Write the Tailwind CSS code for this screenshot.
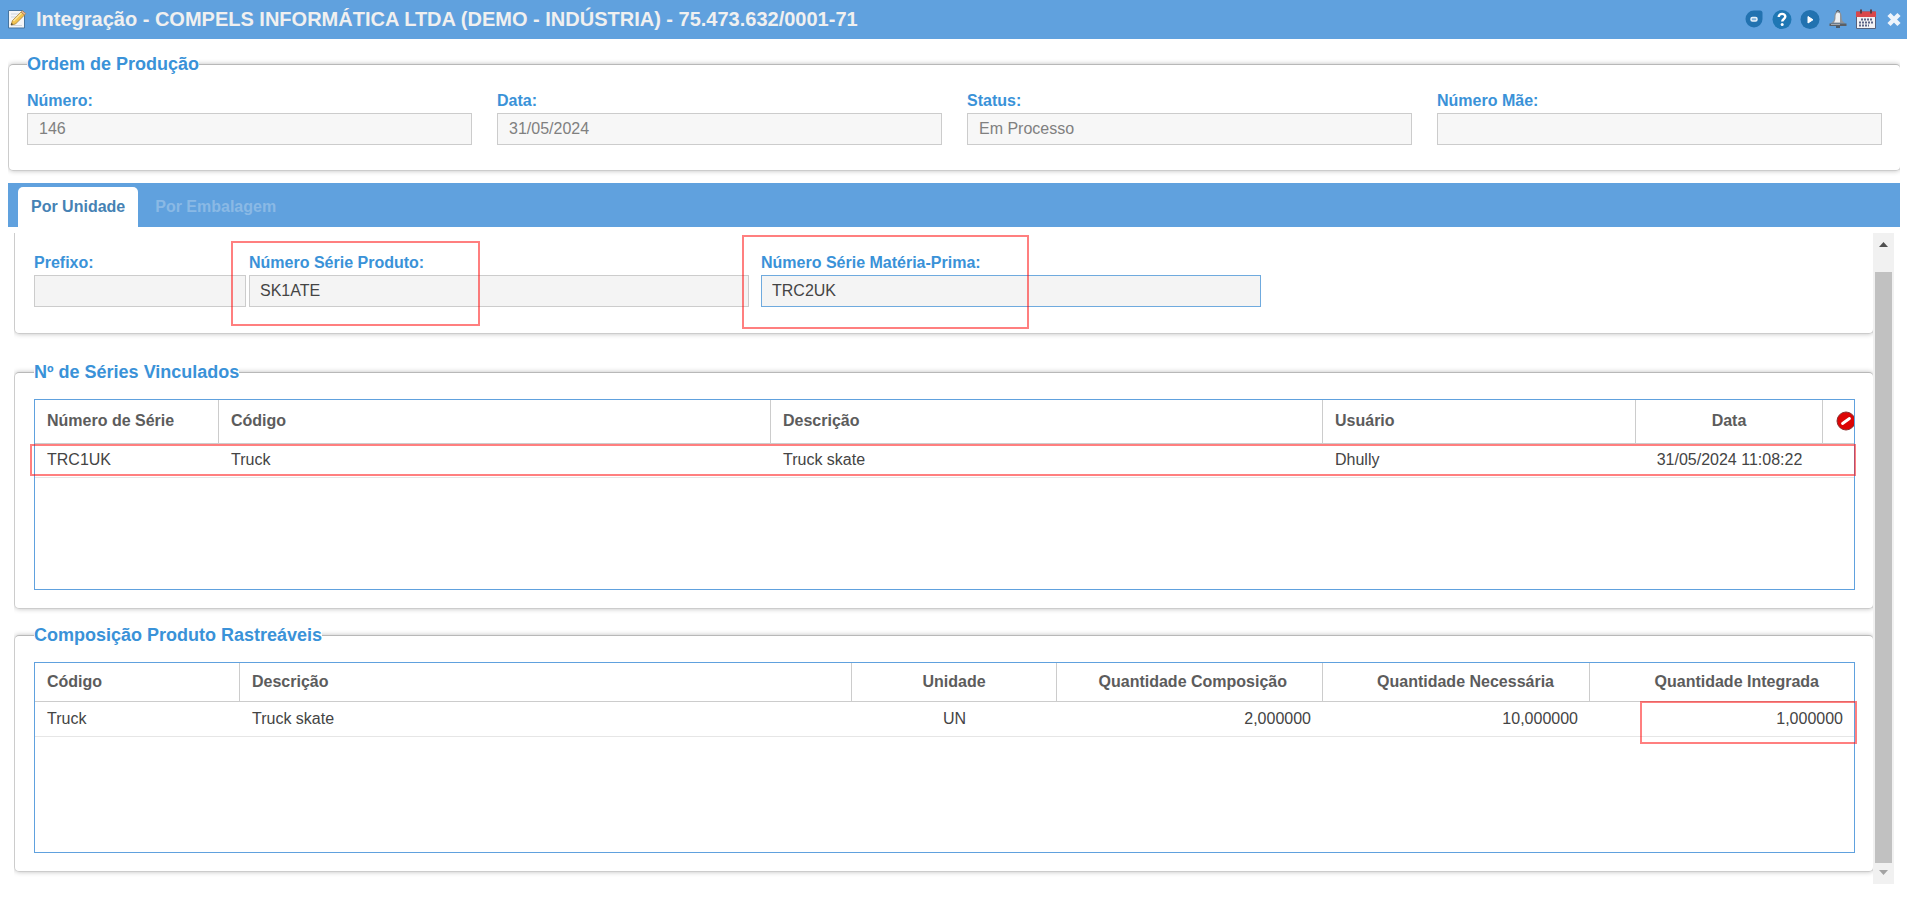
<!DOCTYPE html>
<html lang="pt-BR">
<head>
  <meta charset="UTF-8" />
  <meta name="viewport" content="width=device-width, initial-scale=1" />
  <title>Integração</title>
  <script src="https://cdn.jsdelivr.net/npm/@tailwindcss/browser@4"></script>
</head>
<body class="flex h-screen flex-col overflow-hidden bg-white font-['Liberation_Sans',Arial,sans-serif] text-base/5 text-[#444]">

  <!-- Title bar -->
  <header class="flex h-[39px] shrink-0 items-center bg-[#60a1de] pb-0.5 pl-2 pr-[3px]">
    <svg class="size-5 shrink-0" viewBox="0 0 20 20">
      <path d="M.5 1.500h14l2 2v15.500H.5z" fill="#f4f6f8" stroke="#47759f" stroke-width="1" />
      <path d="M3 5h8M3 8h6M3 16.500h11" stroke="#cfd6dc" />
      <path d="M3 16l1.500-4.500L13 3l3.500 3-9 9z" fill="#f2c44e" stroke="#a6803a" stroke-width=".8" />
      <path d="M5.500 12l8-8" stroke="#fbe7a0" stroke-width="1.500" />
      <path d="M13 3l1.500-1.200 3.300 2.700L16.500 6z" fill="#e9b39a" stroke="#a6803a" stroke-width=".6" />
      <path d="M3 16l.6-2 1.500 1.300z" fill="#333" />
    </svg>
    <h1 class="ml-2 text-xl font-bold text-[#f0f0f0]">Integração - COMPELS INFORMÁTICA LTDA (DEMO - INDÚSTRIA) - 75.473.632/0001-71</h1>
    <nav class="ml-auto flex items-center gap-2">
      <button type="button" aria-label="Minimizar" class="size-5">
        <svg viewBox="0 0 20 20">
          <path d="M10 1.500h6q2.500 0 2.500 2.500v6A8.500 8.500 0 1 1 10 1.500z" fill="#2272b0" />
          <rect x="7" y="8.500" width="6" height="3.500" rx="1.500" fill="#7fb0da" stroke="#e8f1f9" stroke-width="1.500" />
        </svg>
      </button>
      <button type="button" aria-label="Ajuda" class="size-5">
        <svg viewBox="0 0 20 20">
          <circle cx="10" cy="10.500" r="9.500" fill="#1f77b4" />
          <path d="M6.700 8c0-4.200 6.800-4 6.600-.2-.1 2.200-3.100 2.300-3.100 4.800" fill="none" stroke="#fff" stroke-width="2.400" />
          <circle cx="10.200" cy="15.500" r="1.500" fill="#fff" />
        </svg>
      </button>
      <button type="button" aria-label="Executar" class="size-5">
        <svg viewBox="0 0 20 20">
          <circle cx="10" cy="10.500" r="9.500" fill="#2272b0" />
          <path d="M8 7.500v6.500l5-3.250z" fill="#fff" stroke="#fff" />
        </svg>
      </button>
      <button type="button" aria-label="Alertas" class="size-5">
        <svg viewBox="0 0 20 20">
          <path d="M8.500 3a1.500 1.500 0 0 1 3 0" fill="none" stroke="#555" />
          <path d="M10 2.500c-2.800 0-3.600 2.500-3.600 5.500 0 3-1 4.500-3.900 6.500h15c-2.900-2-3.900-3.500-3.900-6.500 0-3-.8-5.500-3.600-5.500z" fill="#8d9298" />
          <path d="M10 3.500C8 3.500 7.500 6 7.500 8.500c0 2-.5 3.500-1.500 5h6V4.500z" fill="#eef0f2" />
          <path d="M1.500 14.500h17v2.500h-17z" fill="#5b5f64" />
          <path d="M3 15.500h9" stroke="#a4a8ac" />
          <path d="M8 18h4" stroke="#444" stroke-width="1.500" />
        </svg>
      </button>
      <button type="button" aria-label="Calendário" class="size-5">
        <svg viewBox="0 0 20 20">
          <path d="M.5 3h19v16.500H.5z" fill="#f3f3f5" stroke="#56607a" />
          <path d="M0 2.500h20V8H0z" fill="#d9474b" />
          <path d="M5 .5v4M15 .5v4" stroke="#5b3b44" stroke-width="2" />
          <path d="M5 10.500h12M3 13.500h14M3 16.500h10" stroke="#5c6486" stroke-width="2" stroke-dasharray="2 1" />
        </svg>
      </button>
      <button type="button" aria-label="Fechar" class="size-5">
        <svg viewBox="0 0 20 20">
          <path d="M5 5.500l10 10M15 5.500L5 15.500" stroke="#eef4fb" stroke-width="4.500" />
        </svg>
      </button>
    </nav>
  </header>

  <main class="flex min-h-0 flex-1 flex-col pb-[17px] pl-2 pr-[7px] pt-[15px]">

    <!-- Ordem de Produção -->
    <div class="shrink-0 overflow-x-clip">
      <fieldset class="-mr-px rounded-[5px] border border-[#ccc] border-t-[#b8b8b8] px-[18px] pb-[25px] shadow-[0_0_5px_rgba(0,0,0,0.25)]">
        <legend class="bg-white text-lg/5 font-bold text-[#3a92d8]">Ordem de Produção</legend>
        <div class="grid grid-cols-4 gap-x-[25px] pt-[17px]">
          <div class="flex flex-col gap-0.5">
            <label for="numero" class="font-bold text-[#3a92d8]">Número:</label>
            <input id="numero" type="text" value="146" disabled class="h-8 w-full border border-[#ccc] bg-[#f7f7f7] px-[11px] text-[#808080]" />
          </div>
          <div class="flex flex-col gap-0.5">
            <label for="data" class="font-bold text-[#3a92d8]">Data:</label>
            <input id="data" type="text" value="31/05/2024" disabled class="h-8 w-full border border-[#ccc] bg-[#f7f7f7] px-[11px] text-[#808080]" />
          </div>
          <div class="flex flex-col gap-0.5">
            <label for="status" class="font-bold text-[#3a92d8]">Status:</label>
            <input id="status" type="text" value="Em Processo" disabled class="h-8 w-full border border-[#ccc] bg-[#f7f7f7] px-[11px] text-[#808080]" />
          </div>
          <div class="flex flex-col gap-0.5">
            <label for="numeroMae" class="font-bold text-[#3a92d8]">Número Mãe:</label>
            <input id="numeroMae" type="text" disabled class="h-8 w-full border border-[#ccc] bg-[#f7f7f7] px-[11px] text-[#808080]" />
          </div>
        </div>
      </fieldset>
    </div>

    <!-- Tabs -->
    <div role="tablist" class="mt-3 flex h-11 shrink-0 items-end bg-[#60a1de] pl-2.5">
      <button type="button" role="tab" aria-selected="true" class="h-10 rounded-t-[5px] bg-white px-[13px] font-bold text-[#4682b4]">Por Unidade</button>
      <button type="button" role="tab" aria-selected="false" disabled class="ml-1 h-10 px-[13px] font-bold text-[#8ab9e5]">Por Embalagem</button>
    </div>

    <!-- Scrolled panel -->
    <div class="mx-1.5 mt-1.5 flex min-h-0 flex-1">
      <div class="relative min-w-0 flex-1 overflow-hidden">

        <div class="-mr-px flex rounded-b-[5px] border border-t-0 border-[#ccc] pb-[26px] pl-[19px] pt-5 shadow-[0_0_5px_rgba(0,0,0,0.25)]">
          <div class="flex w-[212px] flex-col gap-0.5">
            <label for="prefixo" class="font-bold text-[#3a92d8]">Prefixo:</label>
            <input id="prefixo" type="text" class="h-8 w-full border border-[#ccc] bg-[#f4f4f4] px-2.5" />
          </div>
          <div class="ml-[3px] flex w-[500px] flex-col gap-0.5">
            <label for="serieProduto" class="font-bold text-[#3a92d8]">Número Série Produto:</label>
            <input id="serieProduto" type="text" value="SK1ATE" class="h-8 w-full border border-[#ccc] bg-[#f4f4f4] px-2.5" />
          </div>
          <div class="ml-3 flex w-[500px] flex-col gap-0.5">
            <label for="serieMateria" class="font-bold text-[#3a92d8]">Número Série Matéria-Prima:</label>
            <input id="serieMateria" type="text" value="TRC2UK" class="h-8 w-full border border-[#6faade] bg-[#f4f4f4] px-2.5" />
          </div>
        </div>

        <fieldset class="-mr-px mt-7 rounded-[5px] border border-[#ccc] border-t-[#b8b8b8] pb-[18px] pl-[19px] pr-[18px] shadow-[0_0_5px_rgba(0,0,0,0.25)]">
          <legend class="bg-white text-lg/5 font-bold text-[#3a92d8]">Nº de Séries Vinculados</legend>
          <div class="mt-[17px] h-[191px] border border-[#60a1de]">
            <table class="w-full table-fixed border-separate border-spacing-0">
              <colgroup>
                <col class="w-[184px]" />
                <col />
                <col />
                <col class="w-[313px]" />
                <col class="w-[187px]" />
                <col class="w-[31px]" />
              </colgroup>
              <thead class="text-[#5c5c5c]">
                <tr class="h-11">
                  <th class="border-b border-r border-[#ccc] px-3 pb-0.5 text-left">Número de Série</th>
                  <th class="border-b border-r border-[#ccc] px-3 pb-0.5 text-left">Código</th>
                  <th class="border-b border-r border-[#ccc] px-3 pb-0.5 text-left">Descrição</th>
                  <th class="border-b border-r border-[#ccc] px-3 pb-0.5 text-left">Usuário</th>
                  <th class="border-b border-r border-[#ccc] px-3 pb-0.5 text-center">Data</th>
                  <th class="overflow-hidden border-b border-[#ccc] pb-0.5 pl-[13px]">
                    <button type="button" aria-label="Remover" class="block size-5">
                      <svg viewBox="0 0 20 20">
                        <circle cx="10" cy="10" r="9" fill="#dc0505" stroke="#8c3030" />
                        <path d="M6.500 12.500l7-5" stroke="#fff" stroke-width="2.800" stroke-linecap="round" />
                      </svg>
                    </button>
                  </th>
                </tr>
              </thead>
              <tbody>
                <tr class="h-[34px]">
                  <td class="border-b border-[#e6e6e6] px-3 pb-0.5">TRC1UK</td>
                  <td class="border-b border-[#e6e6e6] px-3 pb-0.5">Truck</td>
                  <td class="border-b border-[#e6e6e6] px-3 pb-0.5">Truck skate</td>
                  <td class="border-b border-[#e6e6e6] px-3 pb-0.5">Dhully</td>
                  <td class="border-b border-[#e6e6e6] px-3 pb-0.5 text-center">31/05/2024 11:08:22</td>
                  <td class="border-b border-[#e6e6e6]"></td>
                </tr>
              </tbody>
            </table>
          </div>
        </fieldset>

        <fieldset class="-mr-px mt-4 rounded-[5px] border border-[#ccc] border-t-[#b8b8b8] pb-[18px] pl-[19px] pr-[18px] shadow-[0_0_5px_rgba(0,0,0,0.25)]">
          <legend class="bg-white text-lg/5 font-bold text-[#3a92d8]">Composição Produto Rastreáveis</legend>
          <div class="mt-[17px] h-[191px] border border-[#60a1de]">
            <table class="w-full table-fixed border-separate border-spacing-0">
              <colgroup>
                <col class="w-[205px]" />
                <col />
                <col class="w-[205px]" />
                <col class="w-[266px]" />
                <col class="w-[267px]" />
                <col class="w-[264px]" />
              </colgroup>
              <thead class="text-[#5c5c5c]">
                <tr class="h-[39px]">
                  <th class="border-b border-r border-[#ccc] px-3 text-left">Código</th>
                  <th class="border-b border-r border-[#ccc] px-3 text-left">Descrição</th>
                  <th class="border-b border-r border-[#ccc] px-3 text-center">Unidade</th>
                  <th class="border-b border-r border-[#ccc] pr-[35px] text-right">Quantidade Composição</th>
                  <th class="border-b border-r border-[#ccc] pr-[35px] text-right">Quantidade Necessária</th>
                  <th class="border-b border-[#ccc] pr-[35px] text-right">Quantidade Integrada</th>
                </tr>
              </thead>
              <tbody>
                <tr class="h-[35px]">
                  <td class="border-b border-[#e6e6e6] px-3">Truck</td>
                  <td class="border-b border-[#e6e6e6] px-3">Truck skate</td>
                  <td class="border-b border-[#e6e6e6] px-3 text-center">UN</td>
                  <td class="border-b border-[#e6e6e6] px-3 text-right">2,000000</td>
                  <td class="border-b border-[#e6e6e6] px-3 text-right">10,000000</td>
                  <td class="border-b border-[#e6e6e6] px-[11px] text-right">1,000000</td>
                </tr>
              </tbody>
            </table>
          </div>
        </fieldset>

        <!-- Highlight marks -->
        <div class="pointer-events-none absolute left-[217px] top-2 h-[85px] w-[249px] border-2 border-[#ff0000]/50"></div>
        <div class="pointer-events-none absolute left-[728px] top-0.5 h-[94px] w-[287px] border-2 border-[#ff0000]/50"></div>
        <div class="pointer-events-none absolute left-4 right-[17px] top-[211px] h-8 border-2 border-[#ff0000]/50"></div>
        <div class="pointer-events-none absolute right-4 top-[468px] h-[43px] w-[217px] border-2 border-[#ff0000]/50"></div>
      </div>

      <!-- Scroll bar -->
      <div class="flex w-[21px] shrink-0 flex-col items-center bg-[#f1f1f1]">
        <svg class="mt-2 h-[31px] w-[9px] shrink-0" viewBox="0 0 9 31"><path d="M0 6l4.500-5L9 6z" fill="#505050" /></svg>
        <div class="w-[17px] flex-1 bg-[#c1c1c1]"></div>
        <svg class="h-[21px] w-[9px] shrink-0" viewBox="0 0 9 21"><path d="M0 7l4.500 5L9 7z" fill="#a3a3a3" /></svg>
      </div>
    </div>
  </main>
</body>
</html>
